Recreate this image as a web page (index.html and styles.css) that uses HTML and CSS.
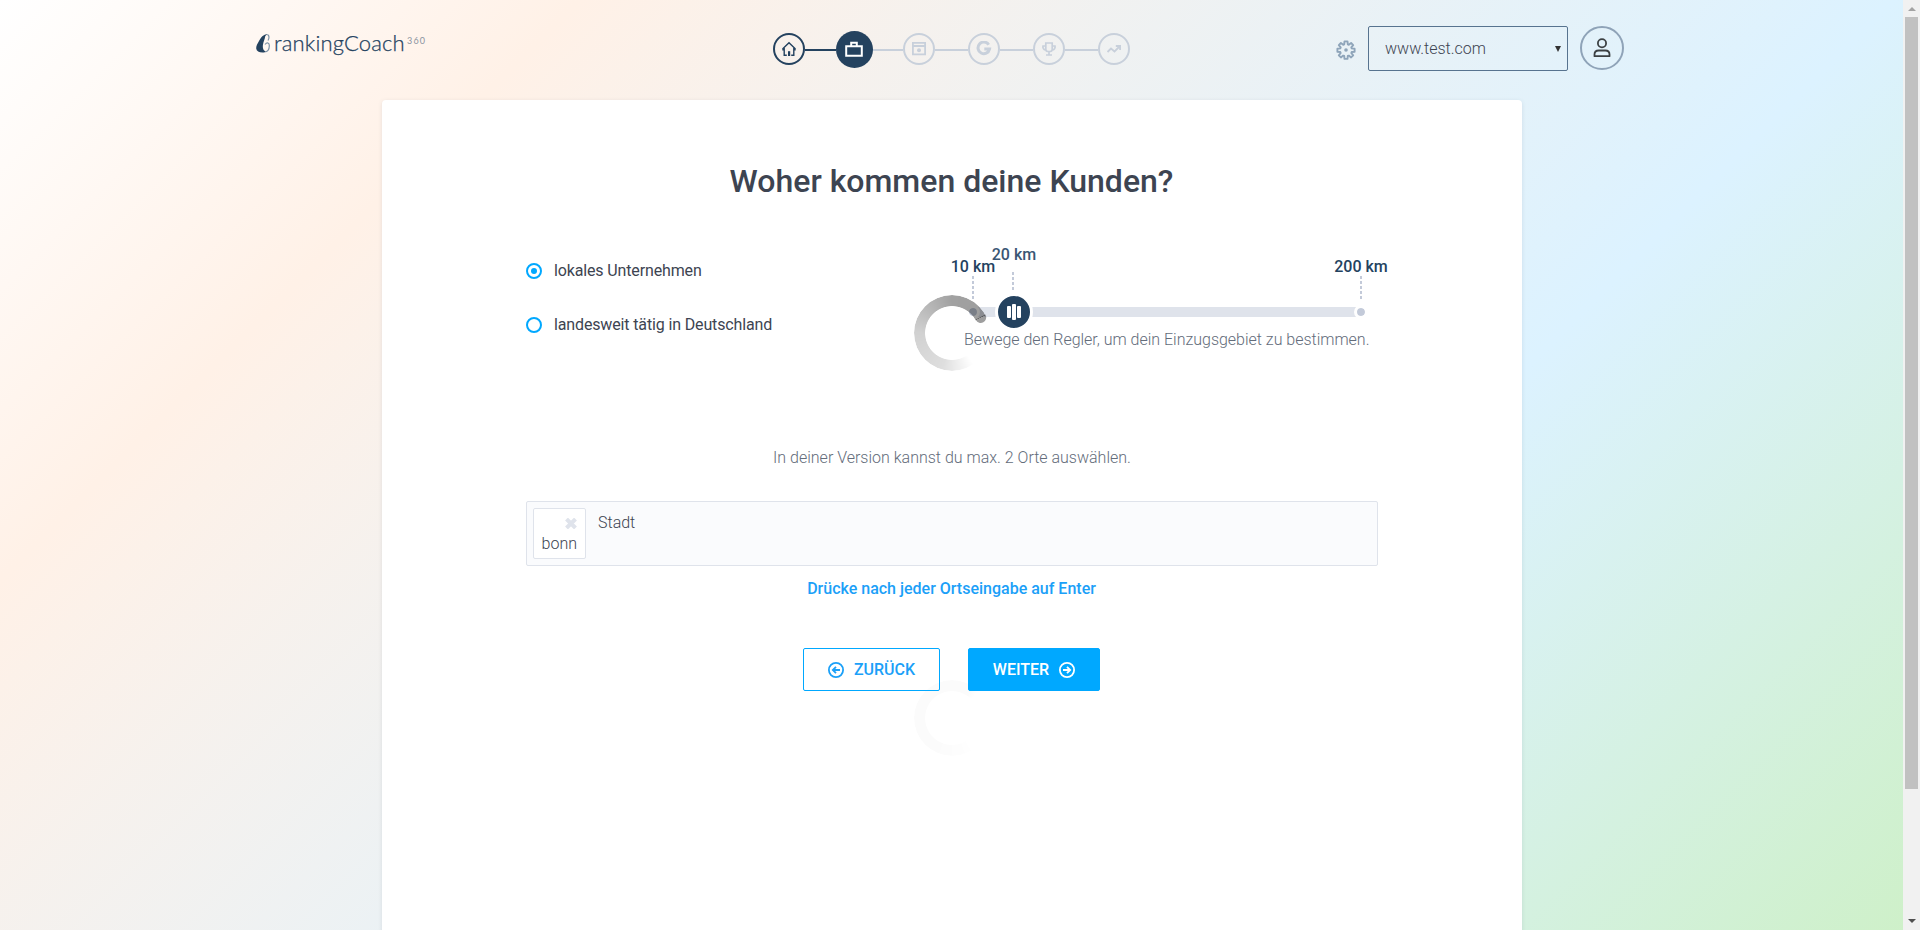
FILE: index.html
```
<!DOCTYPE html>
<html lang="de">
<head>
<meta charset="utf-8">
<title>rankingCoach 360</title>
<link rel="stylesheet" href="styles.css">
</head>
<body>
<div class="page">
  <header class="header">
    <a class="logo">
      <svg class="logo-mark" width="14" height="19" viewBox="0 0 14 19"><path d="M12 0C7 .3 5 3.500 3 7 1.500 9.800 0 12 .2 14.500.5 17 3 18.500 6.500 18.500 8.500 18.500 9.500 18 10 17.500 7 16.500 6.500 13.500 7 10.500 7.500 7.500 9 4.500 9 3.200 9.200 2 10 .8 12 0Z" fill="#24425f"/><path d="M11.500.5C14 2 13 4.500 12 6.500M9 10.500c2-2.500 4.500-2 4.300 1.500-.1 3-1.300 5.500-4 6" fill="none" stroke="#7d92a6" stroke-width="1.200"/></svg>
      <span class="logo-name">rankingCoach</span><span class="logo-suffix">360</span>
    </a>
    <nav class="steps">
      <span class="step done"><svg width="16" height="16" viewBox="0 0 16 16"><path d="M1.500 8 8 1.800 14.500 8M3.200 7v7.200h2.600M12.800 7v7.200h-2.600M2 7.500v1.200h1.500M14 7.500v1.200h-1.500" fill="none" stroke="currentColor" stroke-width="1.400"/><path d="M7 10.200h2.200v4.800H7z" fill="currentColor"/></svg></span>
      <i class="link short done"></i>
      <span class="step active"><svg width="18" height="18" viewBox="0 0 18 18"><path d="M1.200 6.200h15.600v9.600H1.200zM6.200 6V2.800h5.600V6" fill="none" stroke="currentColor" stroke-width="2"/></svg></span>
      <i class="link short"></i>
      <span class="step"><svg width="16" height="16" viewBox="0 0 16 16"><path d="M1.900 1.800h12.200v11.600H1.900zM1.500 5h13" fill="none" stroke="currentColor" stroke-width="1.800"/><circle cx="8" cy="9.300" r="2" fill="currentColor"/></svg></span>
      <i class="link"></i>
      <span class="step"><svg width="16" height="16" viewBox="0 0 16 16"><path d="M12.700 3.700A5.800 5.800 0 1 0 13.500 8.100H8.300" fill="none" stroke="currentColor" stroke-width="3"/></svg></span>
      <i class="link"></i>
      <span class="step"><svg width="16" height="16" viewBox="0 0 16 16"><path d="M4.800 2h6.400v6.200c0 1.300-.8 2.100-2 2.300H6.800c-1.200-.2-2-1-2-2.300zM4.500 5H2c-.5 2 .8 3.800 2.800 4M11.500 5H14c.5 2-.8 3.800-2.800 4M8 10.500v3M5 14h6" fill="none" stroke="currentColor" stroke-width="1.700"/></svg></span>
      <i class="link"></i>
      <span class="step"><svg width="16" height="16" viewBox="0 0 16 16"><path d="m1.500 11 3.500-3.500 3.500 3L13.500 5.500M9.800 5h4.300v4" fill="none" stroke="currentColor" stroke-width="1.800"/></svg></span>
    </nav>
    <div class="account">
      <svg class="gear" width="20" height="20" viewBox="0 0 20 20"><path d="M8.500 1.400h3l.3 3 1 .4 2.300-1.800 2.100 2.100-1.900 2.300.4 1 2.900.3v3l-2.900.3-.4 1 1.900 2.300-2.100 2.100-2.300-1.800-1 .4-.3 2.900h-3l-.3-2.900-1-.4-2.300 1.800-2.100-2.100 1.900-2.300-.4-1-2.900-.3v-3l2.900-.3.4-1-1.900-2.300L4.900 3l2.300 1.800 1-.4z" fill="none" stroke="#8fa5ba" stroke-width="1.900" stroke-linejoin="round"/><circle cx="10" cy="10" r="1.800" fill="#8fa5ba"/></svg>
      <div class="site"><span>www.test.com</span><i class="caret"></i></div>
      <div class="avatar"><svg width="18" height="20" viewBox="0 0 18 20"><circle cx="9" cy="5.200" r="4.100"/><path d="M1.500 18.200v-1.700c0-2.400 1.800-4 4.200-4h6.600c2.400 0 4.200 1.600 4.200 4v1.700z"/></svg></div>
    </div>
  </header>

  <main class="card">
    <h1 class="title">Woher kommen deine Kunden?</h1>
    <div class="options">
      <div class="radios">
        <label class="radio"><i class="dot on"></i><span>lokales Unternehmen</span></label>
        <label class="radio"><i class="dot"></i><span>landesweit tätig in Deutschland</span></label>
      </div>
      <div class="range">
        <div class="slider">
          <div class="track"></div>
          <div class="mark min"><span>10 km</span><i class="dash"></i><i class="end"></i></div>
          <div class="mark max"><span>200 km</span><i class="dash"></i><i class="end"></i></div>
          <div class="mark current"><span>20 km</span><i class="dash"></i></div>
          <div class="handle"><i></i><i class="tall"></i><i></i></div>
        </div>
        <p class="hint">Bewege den Regler, um dein Einzugsgebiet zu bestimmen.</p>
      </div>
    </div>
    <p class="limit">In deiner Version kannst du max. 2 Orte auswählen.</p>
    <div class="cities">
      <div class="tag"><svg width="12" height="11" viewBox="0 0 12 11"><path d="m1.500 1 9 9m0-9-9 9" stroke="#dfe3eb" stroke-width="4"/></svg><span>bonn</span></div>
      <span class="city-input">Stadt</span>
    </div>
    <p class="enter">Drücke nach jeder Ortseingabe auf Enter</p>
    <div class="actions">
      <button class="btn back"><svg width="16" height="16" viewBox="0 0 16 16"><circle cx="8" cy="8" r="7.100"/><path d="M12 8H5M8 4.800 4.800 8 8 11.200"/></svg><span>ZURÜCK</span></button>
      <button class="btn next"><span>WEITER</span><svg width="16" height="16" viewBox="0 0 16 16"><circle cx="8" cy="8" r="7.100"/><path d="M4 8h7M8 4.800 11.200 8 8 11.200"/></svg></button>
    </div>
    <div class="spinner"><i class="ring"></i><i class="cap"></i></div>
    <div class="spinner faint"><i class="ring"></i></div>
  </main>
</div>
<aside class="scrollbar"><i class="up"></i><i class="thumb"></i><i class="down"></i></aside>
</body>
</html>
```
FILE: styles.css
```
* { box-sizing: border-box; }
body {
  margin: 0;
  height: 930px;
  overflow: hidden;
  display: flex;
  font: 300 16px/20px Roboto, "Liberation Sans", sans-serif;
  color: #3d4451;
}
p, h1 { margin: 0; }
svg { display: block; flex: none; }

.page {
  width: 1903px;
  height: 930px;
  overflow: hidden;
  background: linear-gradient(135deg, #fff 0%, #fff1e7 19.4%, #dcf2ff 63.5%, #cdf0c4 98%) 0 0 / 1903px 1079px no-repeat;
}

.header {
  height: 100px;
  display: grid;
  grid-template-columns: 517px 358px 1fr;
  padding: 0 279px 0 256px;
}
.logo { display: flex; padding-top: 34px; height: 60px; color: #24425f; }
.logo-name { margin: -1px 0 0 4px; font: 300 22px/20px Lato, sans-serif; letter-spacing: 0.16px; -webkit-text-stroke: 0.25px #24425f; width: 130px; white-space: nowrap; }
.logo-suffix { margin: 2px 0 0 3px; font: 400 9px/9px Lato, sans-serif; letter-spacing: 1.2px; color: #8a93a1; }

.steps { display: flex; align-items: center; height: 36px; margin-top: 31px; }
.step {
  width: 32px; height: 32px; flex: none;
  border: 2px solid #c8d0db; border-radius: 50%;
  display: flex; align-items: center; justify-content: center;
  color: #c8d0db;
}
.step.done { border-color: #24425f; color: #24425f; }
.step.active { width: 37px; height: 37px; border: 0; background: #24425f; color: #fff; }
.link { flex: none; width: 33px; height: 2px; margin-top: 2px; background: #c8d0db; }
.link.short { width: 30.5px; }
.link.done { background: #24425f; }

.account { display: flex; justify-content: flex-end; padding-top: 26px; }
.gear { margin: 14px 12px 0 0; }
.site {
  width: 200px; height: 45px; margin: 0 12px 0 0; padding: 0 6px 0 16px;
  border: 1px solid #57738f; border-radius: 2px;
  display: flex; align-items: center; justify-content: space-between;
}
.caret { border: 3px solid transparent; border-top: 6px solid #333; border-bottom: 0; }
.avatar {
  width: 44px; height: 44px;
  border: 2px solid #8fa3b8; border-radius: 50%;
  display: flex; align-items: center; justify-content: center;
}
.avatar svg { fill: none; stroke: #3c4043; stroke-width: 1.8; stroke-linejoin: round; }

.card {
  position: relative;
  z-index: 0;
  width: 1140px; height: 979px; margin-left: 382px; padding: 60px 144px 0;
  background: #fff; border-radius: 4px;
  box-shadow: 0 1px 4px rgba(60, 80, 100, .13);
}
.title { padding-right: 1px; text-align: center; font-weight: 500; font-size: 32px; line-height: 42px; color: #3d4451; }
.options { display: grid; grid-template-columns: 426px 426px; padding-top: 48px; height: 246px; }
.radios { display: flex; flex-direction: column; gap: 34px; padding-top: 11px; }
.radio { display: flex; align-items: center; gap: 12px; font-weight: 400; letter-spacing: -0.14px; }
.dot { width: 16px; height: 16px; border: 2px solid #00a8ff; border-radius: 50%; display: flex; }
.dot.on::after { content: ""; width: 6px; height: 6px; margin: auto; background: #00a8ff; border-radius: 50%; }

.slider { position: relative; height: 80px; }
.track { position: absolute; left: 21px; right: 17px; top: 57px; height: 10px; background: #dfe3eb; }
.mark { position: absolute; width: 60px; display: flex; flex-direction: column; align-items: center; font-weight: 500; line-height: 20px; color: #24425f; }
.min { left: -9px; top: 7px; }
.max { left: 379px; top: 7px; }
.current { left: 32px; top: -5px; color: #3a5674; }
.dash { width: 2px; height: 24px; margin-top: -1px; background: repeating-linear-gradient(#c3cad9 0 3px, transparent 3px 5px); }
.current .dash { height: 18px; margin: 7px 2px 0 0; }
.end { width: 14px; height: 14px; margin-top: 5px; border: 3px solid #fff; border-radius: 50%; background: #c3cad9; background-clip: padding-box; }
.handle {
  position: absolute; left: 43px; top: 43px; width: 38px; height: 38px;
  border: 3px solid #fff; border-radius: 50%; background: #24425f;
  display: flex; align-items: center; justify-content: center; gap: 1px;
}
.handle i { width: 4px; height: 12px; background: #fff; border-radius: 1px; }
.handle .tall { height: 16px; }
.hint { padding: 0 0 0 12px; color: #636c7a; white-space: nowrap; letter-spacing: -0.01px; }
.limit { text-align: center; line-height: 20px; color: #636c7a; }
.cities {
  height: 65px; margin-top: 33px; padding: 6px;
  border: 1px solid #dfe3eb; border-radius: 2px; background: #fafbfd;
  display: flex; gap: 12px;
}
.tag {
  width: 53px; height: 51px; padding: 9px 8px 0;
  border: 1px solid #dfe3eb; border-radius: 2px; background: #fff;
  display: flex; flex-direction: column; align-items: flex-end; gap: 5px;
}
.city-input { padding-top: 5px; }
.enter { margin-top: 13px; padding-right: 1px; text-align: center; font-weight: 500; color: #1ba0f8; }
.actions { display: flex; justify-content: center; gap: 28px; margin-top: 49px; padding-right: 1px; }
.btn {
  height: 43px; padding: 0; border: 1px solid #00a8ff; border-radius: 2px;
  display: flex; align-items: center; justify-content: center; gap: 10px;
  font: 500 16px/20px Roboto, sans-serif;
}
.btn svg { fill: none; stroke: currentColor; stroke-width: 1.8; }
.back { width: 137px; background: transparent; color: #1ba0f8; }
.next { width: 132px; background: #00a8ff; color: #fff; }

.spinner { position: absolute; left: 532px; top: 194.5px; width: 76px; height: 76px; }
.ring {
  position: absolute; inset: 0; border-radius: 50%;
  background: conic-gradient(from 145deg, rgba(0,0,0,0) 0deg, rgba(0,0,0,.13) 50deg, rgba(0,0,0,.18) 125deg, rgba(0,0,0,.37) 215deg, rgba(0,0,0,.38) 277deg, transparent 277deg);
  -webkit-mask: radial-gradient(circle, transparent 26.5px, #000 27.3px);
  mask: radial-gradient(circle, transparent 26.5px, #000 27.3px);
}
.cap {
  position: absolute; left: 61.2px; top: 22.7px; width: 11px; height: 5.5px;
  border-radius: 0 0 5.5px 5.5px; background: rgba(0, 0, 0, .38);
  transform-origin: top center;
  transform: rotate(-28deg);
}
.faint { top: 580px; z-index: -1; }
.faint .ring { background: conic-gradient(from 150deg, rgba(0,0,0,.004) 0deg, rgba(0,0,0,.014) 60deg, rgba(0,0,0,.014) 245deg, transparent 255deg); }

.scrollbar { width: 17px; height: 930px; padding: 7px 2px; background: #f1f1f1; display: flex; flex-direction: column; align-items: center; }
.thumb { width: 13px; height: 772px; margin-top: 6px; background: #c1c1c1; }
.up { border: 4px solid transparent; border-top: 0; border-bottom-color: #a3a3a3; }
.down { margin-top: auto; border: 4px solid transparent; border-bottom: 0; border-top-color: #505050; }
```
